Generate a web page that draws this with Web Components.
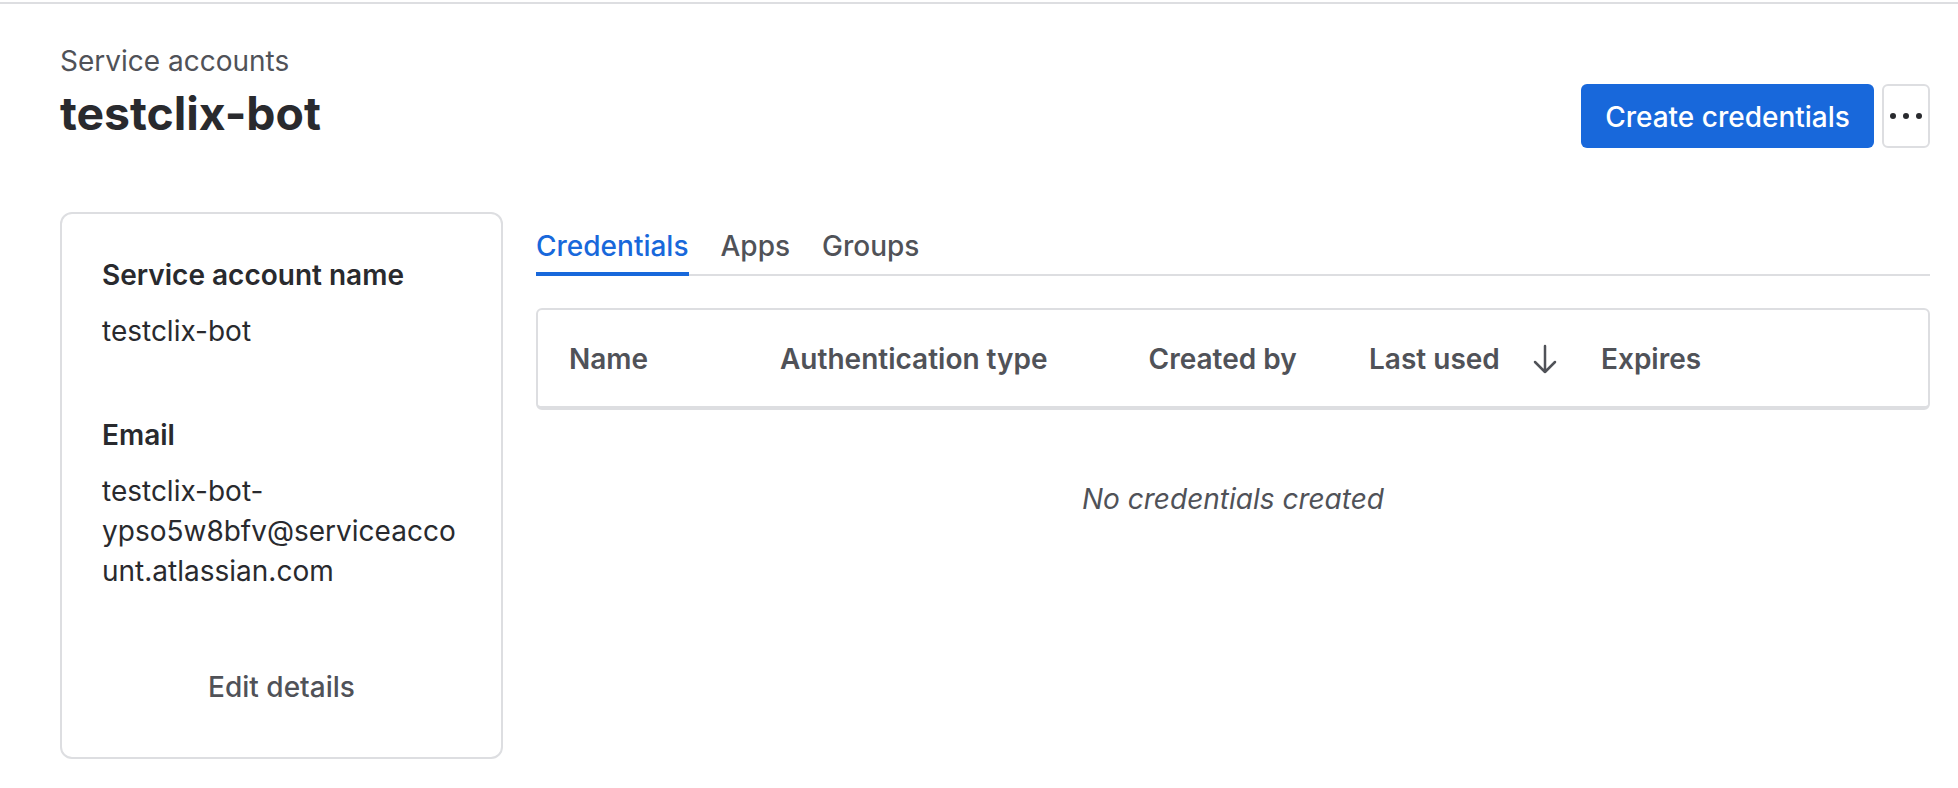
<!DOCTYPE html>
<html lang="en">
<head>
<meta charset="utf-8">
<title>testclix-bot</title>
<style>
  html, body { margin: 0; background: #fff; }
  body { font-family: Inter, "Noto Sans", sans-serif; color: #292a2e; }
</style>
</head>
<body>
<account-page>
  <page-header slot="header" crumb="Service accounts" title="testclix-bot"></page-header>
  <details-card slot="side">
    <detail-field label="Service account name">testclix-bot</detail-field>
    <detail-field label="Email">testclix-bot-ypso5w8bfv@serviceaccount.atlassian.com</detail-field>
  </details-card>
  <tab-bar slot="main">
    <tab-item active>Credentials</tab-item>
    <tab-item>Apps</tab-item>
    <tab-item>Groups</tab-item>
  </tab-bar>
  <cred-table slot="main" empty="No credentials created"></cred-table>
</account-page>

<script>
// --- Page shell --- //
class AccountPage extends HTMLElement {
    constructor() {
        super();
        this.attachShadow({ mode: 'open' });
        this.shadowRoot.innerHTML = `
            <style>
                :host { display: block; margin-top: 2px; border-top: 2px solid #dddee1; }
                .body { display: flex; gap: 33px; padding: 0 28px 0 60px; }
                .main { flex: 1; min-width: 0; display: flex; flex-direction: column; }
            </style>
            <slot name="header"></slot>
            <div class="body">
                <slot name="side"></slot>
                <div class="main"><slot name="main"></slot></div>
            </div>
        `;
    }
}

// --- Header with breadcrumb and actions --- //
class PageHeader extends HTMLElement {
    constructor() {
        super();
        this.attachShadow({ mode: 'open' });
        this.shadowRoot.innerHTML = `
            <style>
                :host { display: flex; justify-content: space-between; height: 208px; padding: 0 28px 0 60px; }
                .crumb { margin-top: 37px; font-size: 28px; line-height: 40px; color: #505258; }
                h1 { margin: 4px 0 0; font-size: 46.3px; line-height: 56px; font-weight: 700; color: #292a2e; }
                .actions { display: flex; gap: 8px; margin-top: 80px; height: 64px; }
                button { font-family: inherit; box-sizing: border-box; height: 64px; cursor: pointer; }
                .primary { width: 293px; padding: 2px 0 0; border: 0; border-radius: 6px; background: #1868db; color: #fff; font-size: 28px; font-weight: 500; }
                .more { width: 48px; padding: 0; border: 2px solid #dddee1; border-radius: 6px; background: #fff; display: flex; align-items: center; justify-content: center; }
            </style>
            <div>
                <div class="crumb">${this.getAttribute('crumb')}</div>
                <h1>${this.getAttribute('title')}</h1>
            </div>
            <div class="actions">
                <button class="primary">Create credentials</button>
                <button class="more" aria-label="More">
                    <svg width="32" height="8" viewBox="0 0 32 8"><circle cx="3" cy="4" r="3" fill="#292a2e"/><circle cx="16" cy="4" r="3" fill="#292a2e"/><circle cx="29" cy="4" r="3" fill="#292a2e"/></svg>
                </button>
            </div>
        `;
    }
}

// --- Left details card --- //
class DetailsCard extends HTMLElement {
    constructor() {
        super();
        this.attachShadow({ mode: 'open' });
        this.shadowRoot.innerHTML = `
            <style>
                :host { display: flex; flex-direction: column; box-sizing: border-box; width: 443px; height: 547px; padding: 41px 40px 0 40px; border: 2px solid #dddee1; border-radius: 12px; }
                .edit { margin-top: 12px; text-align: center; font-size: 28px; line-height: 40px; font-weight: 500; color: #505258; }
            </style>
            <slot></slot>
            <div class="edit">Edit details</div>
        `;
    }
}

class DetailField extends HTMLElement {
    constructor() {
        super();
        this.attachShadow({ mode: 'open' });
        this.shadowRoot.innerHTML = `
            <style>
                :host { display: block; margin-bottom: 64px; }
                .label { font-size: 28px; line-height: 40px; font-weight: 600; color: #292a2e; }
                .value { margin-top: 16px; font-size: 28px; line-height: 40px; color: #292a2e; overflow-wrap: anywhere; }
            </style>
            <div class="label">${this.getAttribute('label')}</div>
            <div class="value"><slot></slot></div>
        `;
    }
}

// --- Tabs --- //
class TabBar extends HTMLElement {
    constructor() {
        super();
        this.attachShadow({ mode: 'open' });
        this.shadowRoot.innerHTML = `
            <style>
                :host { display: flex; gap: 32px; height: 64px; box-shadow: inset 0 -2px 0 #dddee1; }
            </style>
            <slot></slot>
        `;
    }
}

class TabItem extends HTMLElement {
    constructor() {
        super();
        this.attachShadow({ mode: 'open' });
        this.shadowRoot.innerHTML = `
            <style>
                :host { display: block; box-sizing: border-box; height: 64px; padding-top: 14px; font-size: 28px; line-height: 40px; font-weight: 500; color: #505258; }
                :host([active]) { color: #1868db; border-bottom: 4px solid #1868db; }
            </style>
            <slot></slot>
        `;
    }
}

// --- Credentials table --- //
class CredTable extends HTMLElement {
    constructor() {
        super();
        this.attachShadow({ mode: 'open' });
        const columns = ['Name', 'Authentication type', 'Created by', 'Last used', 'Expires'];
        this.shadowRoot.innerHTML = `
            <style>
                :host { display: block; margin-top: 32px; }
                .head { box-sizing: border-box; height: 102px; display: grid; grid-template-columns: 211px 368.5px 220.5px 232px 1fr; align-items: center; padding: 2px 0 0 31px; border: 2px solid #dddee1; border-bottom-width: 4px; border-radius: 6px; }
                .col { display: flex; align-items: center; font-size: 28px; line-height: 40px; font-weight: 600; color: #505258; }
                svg { margin-left: 33px; flex: none; }
                .empty { margin-top: 69px; text-align: center; font-size: 28px; line-height: 40px; font-style: italic; color: #505258; }
            </style>
            <div class="head">
                ${columns.map(name => `<div class="col">${name}${name === 'Last used' ? `
                    <svg width="24" height="30" viewBox="0 0 24 30" fill="none" stroke="#505258" stroke-width="2.5" stroke-linecap="round" stroke-linejoin="round"><path d="M12 2v26M2 18l10 10 10-10"/></svg>` : ''}</div>`).join('')}
            </div>
            <div class="empty">${this.getAttribute('empty')}</div>
        `;
    }
}

customElements.define('account-page', AccountPage);
customElements.define('page-header', PageHeader);
customElements.define('details-card', DetailsCard);
customElements.define('detail-field', DetailField);
customElements.define('tab-bar', TabBar);
customElements.define('tab-item', TabItem);
customElements.define('cred-table', CredTable);
</script>
</body>
</html>
